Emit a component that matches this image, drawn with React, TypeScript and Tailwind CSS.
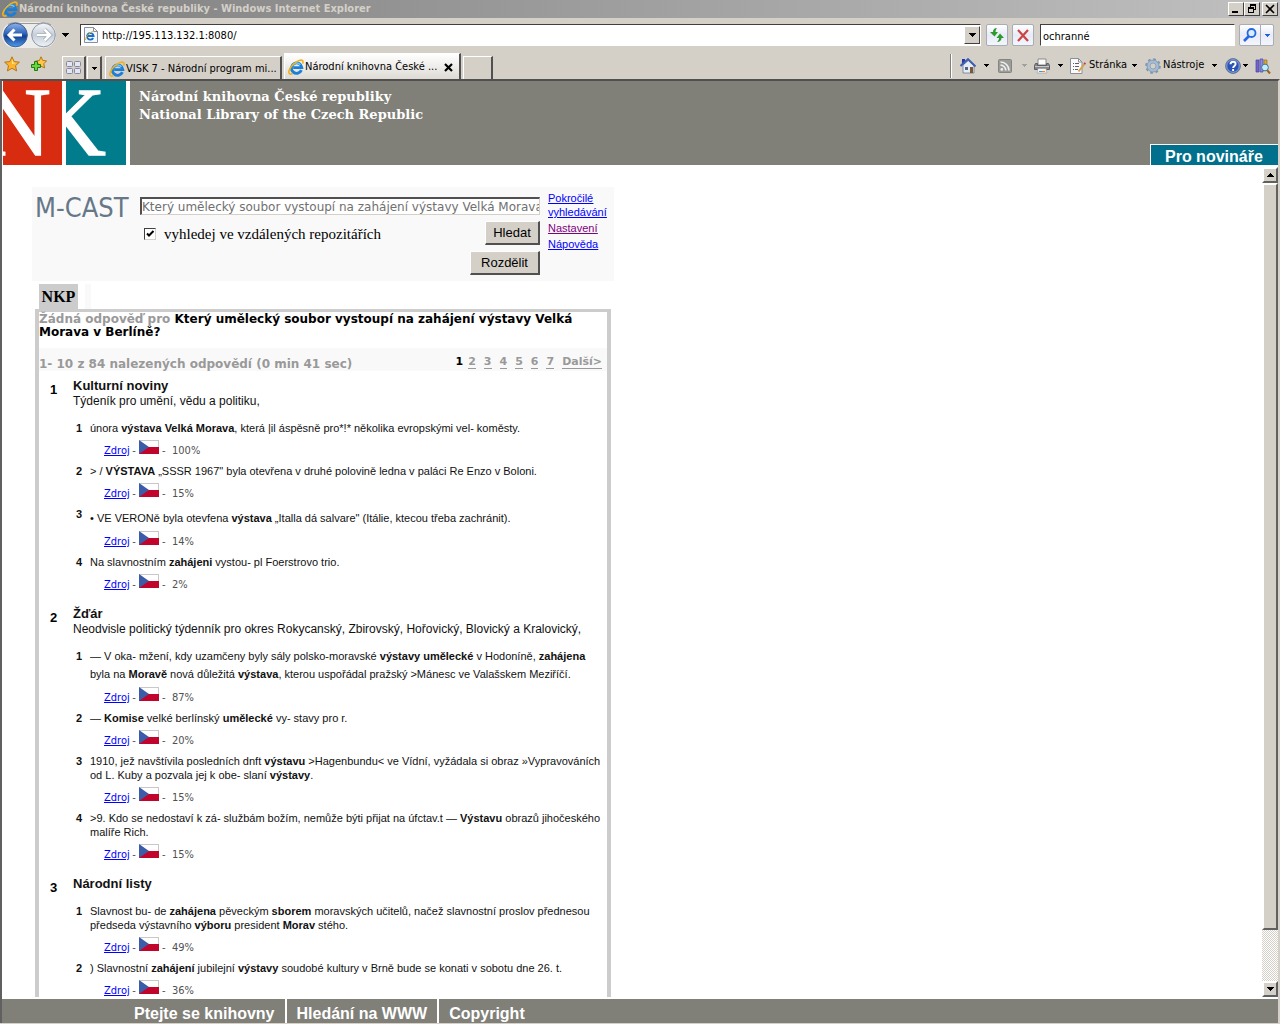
import type { ReactNode } from "react";

type Hit = {
  lines: ReactNode[];
  tall?: number;
  score: string;
};

type Group = {
  title: string;
  subtitle?: string;
  hits: Hit[];
};

const groups: Group[] = [
  {
    title: "Kulturní noviny",
    subtitle: "Týdeník pro umění, vědu a politiku,",
    hits: [
      { lines: [<>února <b>výstava Velká Morava</b>, která |il áspěsně pro*!* několika evropskými vel- koměsty.</>], score: "100%" },
      { lines: [<>&gt; / <b>VÝSTAVA</b> „SSSR 1967" byla otevřena v druhé polovině ledna v paláci Re Enzo v Boloni.</>], score: "15%" },
      { lines: [<>• VE VERONě byla otevfena <b>výstava</b> „Italla dá salvare" (Itálie, ktecou třeba zachránit).</>], tall: 0, score: "14%" },
      { lines: [<>Na slavnostním <b>zahájeni</b> vystou- pl Foerstrovo trio.</>], score: "2%" },
    ],
  },
  {
    title: "Žďár",
    subtitle: "Neodvisle politický týdenník pro okres Rokycanský, Zbirovský, Hořovický, Blovický a Kralovický,",
    hits: [
      {
        lines: [
          <>— V oka- mžení, kdy uzamčeny byly sály polsko-moravské <b>výstavy umělecké</b> v Hodoníně, <b>zahájena</b></>,
          <>byla na <b>Moravě</b> nová důležitá <b>výstava</b>, kterou uspořádal pražský &gt;Mánesc ve Valašskem Meziříčí.</>,
        ],
        tall: 1,
        score: "87%",
      },
      { lines: [<>— <b>Komise</b> velké berlínský <b>umělecké</b> vy- stavy pro r.</>], score: "20%" },
      {
        lines: [
          <>1910, jež navštívila posledních dnft <b>výstavu</b> &gt;Hagenbundu&lt; ve Vídní, vyžádala si obraz »Vypravováních</>,
          <>od L. Kuby a pozvala jej k obe- slaní <b>výstavy</b>.</>,
        ],
        score: "15%",
      },
      {
        lines: [
          <>&gt;9. Kdo se nedostaví k zá- službám božím, nemůže býti přijat na úfctav.t — <b>Výstavu</b> obrazů jihočeského</>,
          <>malíře Rich.</>,
        ],
        score: "15%",
      },
    ],
  },
  {
    title: "Národní listy",
    hits: [
      {
        lines: [
          <>Slavnost bu- de <b>zahájena</b> pěveckým <b>sborem</b> moravských učitelů, načež slavnostní proslov přednesou</>,
          <>předseda výstavního <b>výboru</b> president <b>Morav</b> stého.</>,
        ],
        score: "49%",
      },
      { lines: [<>) Slavnostní <b>zahájení</b> jubilejní <b>výstavy</b> soudobé kultury v Brně bude se konati v sobotu dne 26. t.</>], score: "36%" },
    ],
  },
];

function Caret({ className = "w-[7px] text-black" }: { className?: string }) {
  return (
    <svg className={`h-[4px] shrink-0 ${className}`} viewBox="0 0 7 4" fill="currentColor" shapeRendering="crispEdges">
      <path d="M0 0h7v1H6v1H5v1H4v1H3V3H2V2H1V1H0z" />
    </svg>
  );
}

function SmallCaret({ className = "text-black" }: { className?: string }) {
  return (
    <svg className={`h-[3px] w-[5px] shrink-0 ${className}`} viewBox="0 0 5 3" fill="currentColor" shapeRendering="crispEdges">
      <path d="M0 0h5v1H4v1H3v1H2V2H1V1H0z" />
    </svg>
  );
}

function IeLogo({ className = "size-4" }: { className?: string }) {
  return (
    <svg className={`shrink-0 ${className}`} viewBox="0 0 16 16" fill="none">
      <path d="M13.4 11.2A5.2 5.2 0 1 1 13.8 8.6H5.2" stroke="#1b7fd8" strokeWidth="2.9" />
      <path d="M4.3 6.6A4.8 4.8 0 0 1 12.4 5.8" stroke="#68c8fc" strokeWidth="1.4" />
      <path d="M14.6 4.6C15.6 2 14.6 .4 11.2 1.5 6.8 3 2 8 1 12c-.6 2.6.8 3.8 3.6 2.6" stroke="#f0b020" strokeWidth="1.6" />
    </svg>
  );
}

function BackForward() {
  return (
    <svg className="h-[30px] w-[56px] shrink-0" viewBox="0 0 56 30">
      <defs>
        <linearGradient id="back" x1="0" y1="0" x2="0" y2="1">
          <stop offset="0" stopColor="#8fb2e8" />
          <stop offset=".45" stopColor="#2b62b8" />
          <stop offset=".55" stopColor="#123f8f" />
          <stop offset="1" stopColor="#4f9df0" />
        </linearGradient>
        <linearGradient id="fwd" x1="0" y1="0" x2="0" y2="1">
          <stop offset="0" stopColor="#f6f8fa" />
          <stop offset=".5" stopColor="#c6ced9" />
          <stop offset="1" stopColor="#eef3f8" />
        </linearGradient>
      </defs>
      <rect x="2" y="2" width="54" height="26" rx="13" fill="#ececea" />
      <path d="M8 4.500Q14 1.500 20 3.500H39Q45 1.500 51 5" stroke="#9a9a96" fill="none" strokeWidth="1.2" />
      <circle cx="15.500" cy="15" r="11.800" fill="url(#back)" stroke="#3e5f96" />
      <circle cx="43.500" cy="15" r="11.800" fill="url(#fwd)" stroke="#8d97a6" />
      <path d="M9 15H22M14.500 9.500L9 15L14.500 20.500" stroke="#fff" strokeWidth="3" fill="none" />
      <path d="M37 15H50M44.500 9.500L50 15L44.500 20.500" stroke="#9aa3b0" strokeWidth="4" fill="none" />
      <path d="M37 15H50M44.500 9.500L50 15L44.500 20.500" stroke="#fff" strokeWidth="2.600" fill="none" />
    </svg>
  );
}

function Star() {
  return (
    <svg className="size-4" viewBox="0 0 16 16">
      <path d="M8 .8l2.200 4.800 5.200.6-3.900 3.500 1.100 5.200L8 12.300l-4.600 2.600 1.100-5.200L.6 6.200l5.200-.6z" fill="#fcb42c" stroke="#b8741a" />
      <path d="M8 3l1.300 3.500 3 .5-4.300 1z" fill="#ffe890" />
    </svg>
  );
}

function AddStar() {
  return (
    <svg className="size-4" viewBox="0 0 16 16">
      <path d="M10 .8l1.700 3.600 3.900.5-2.800 2.800.8 4.200L10 10.200l-3.600 1.700.7-4.200L4.500 5l3.900-.5z" fill="#fcc848" stroke="#b8741a" />
      <path d="M3.500 5.500h3v3h3v3h-3v3h-3v-3h-3v-3h3z" fill="#6ad444" stroke="#1c7c14" />
    </svg>
  );
}

function QuickTabs() {
  return (
    <svg className="size-4" viewBox="0 0 16 16" fill="#e4e6f6" stroke="#83879c">
      <rect x=".5" y="1.500" width="6" height="5" rx="1" />
      <rect x="8.500" y="1.500" width="6" height="5" rx="1" />
      <rect x=".5" y="8.500" width="6" height="5" rx="1" />
      <rect x="8.500" y="8.500" width="6" height="5" rx="1" />
    </svg>
  );
}

function Home() {
  return (
    <svg className="size-4" viewBox="0 0 16 16">
      <path d="M2 1h3v5H2z" fill="#2438b0" />
      <path d="M3 7l6-5 5 6v7H3z" fill="#e4ecf6" stroke="#6b7890" strokeWidth=".8" />
      <path d="M.5 8L8 1.200L15.500 8.500" fill="none" stroke="#3f5eac" strokeWidth="2" />
      <path d="M5 9h3v3H5z" fill="#56657c" />
      <path d="M10 9h3v6h-3z" fill="#7e5634" />
    </svg>
  );
}

function Feed() {
  return (
    <svg className="size-4" viewBox="0 0 16 16" fill="none" stroke="#efefef" strokeWidth="1.700">
      <rect x="1.500" y="1.500" width="13" height="13" rx="1" fill="#9c9c98" stroke="#858580" strokeWidth="1" />
      <circle cx="4.800" cy="11.400" r="1.400" fill="#efefef" stroke="none" />
      <path d="M3.500 7.200a5.300 5.300 0 0 1 5.300 5.300M3.500 4a8.500 8.500 0 0 1 8.500 8.500" />
    </svg>
  );
}

function Printer() {
  return (
    <svg className="size-4" viewBox="0 0 16 16">
      <path d="M4 1h8v6H4z" fill="#fdfdfd" stroke="#8a8a8a" />
      <path d="M1.500 5.500h2v2h9v-2h2l1 2v4H.5v-4z" fill="#85858b" stroke="#5e5e62" />
      <path d="M1 8.500h14" stroke="#c8c8cc" />
      <path d="M4 10.500h8l1 4.500H3z" fill="#f6f6f6" stroke="#999" strokeWidth=".6" />
      <path d="M5 13.500h3" stroke="#28a0d8" />
      <path d="M8 13.500h3" stroke="#e8862c" />
    </svg>
  );
}

function PageIcon() {
  return (
    <svg className="size-4" viewBox="0 0 16 16">
      <path d="M.5.5h8l3.500 3.500v11.500H.5z" fill="#fafafa" stroke="#8a8f98" />
      <path d="M8.500.5V4H12" fill="none" stroke="#8a8f98" />
      <path d="M3 5.500h1M5 5.500h4M3 8.500h1M5 8.500h4M3 11.500h1M5 11.500h3" stroke="#5b6070" />
      <path d="M14.500 6L8.500 13.500" stroke="#d8a048" strokeWidth="2" />
      <path d="M15.300 4.800L14.300 6.200" stroke="#c44040" strokeWidth="2" />
    </svg>
  );
}

function Gear() {
  return (
    <svg className="size-4" viewBox="0 0 16 16" fill="none">
      <circle cx="8" cy="8" r="6.800" stroke="#7d93ac" strokeWidth="2" strokeDasharray="2.670 2.670" />
      <circle cx="8" cy="8" r="4.800" stroke="#a4bcd4" strokeWidth="3" />
      <circle cx="8" cy="8" r="6" stroke="#7790ac" strokeWidth=".7" />
      <circle cx="8" cy="8" r="3" stroke="#7790ac" strokeWidth=".7" />
    </svg>
  );
}

function Help() {
  return (
    <svg className="size-4" viewBox="0 0 16 16">
      <circle cx="8" cy="8" r="7.400" fill="#2b55b4" stroke="#6c7890" />
      <circle cx="8" cy="8" r="6.300" fill="none" stroke="#a8bce8" strokeWidth=".8" />
      <path d="M5.500 6.300C5.500 2.800 10.600 3 10.600 6.100c0 1.800-2.500 1.800-2.500 3.900M8.100 11v2" stroke="#fff" strokeWidth="1.900" fill="none" />
    </svg>
  );
}

function Research() {
  return (
    <svg className="size-4" viewBox="0 0 16 16">
      <path d="M1 2h3v12H1z" fill="#6d68c8" stroke="#4640a0" strokeWidth=".7" />
      <path d="M5 1h3v13H5z" fill="#8d8ae0" stroke="#4640a0" strokeWidth=".7" />
      <path d="M9 2h3v6H9z" fill="#d8a838" stroke="#927020" strokeWidth=".7" />
      <path d="M12 12l3 3.500" stroke="#9a6420" strokeWidth="2" />
      <circle cx="10" cy="9.500" r="3.400" fill="#bfeefa" stroke="#48708c" />
    </svg>
  );
}

function Flag() {
  return (
    <svg className="h-[14px] w-5 shrink-0 self-start" viewBox="0 0 20 14">
      <rect x=".5" y=".5" width="19" height="13" fill="#fff" stroke="#c8c8c8" />
      <path d="M0 7h20v7H0z" fill="#c0042c" />
      <path d="M0 0l10 7L0 14z" fill="#3c5ca8" />
    </svg>
  );
}

function WindowButton({ label, children }: { label: string; children: ReactNode }) {
  return (
    <button aria-label={label} className="flex h-[14px] w-4 items-center justify-center border border-t-white border-r-[#404040] border-b-[#404040] border-l-white bg-[#d4d0c8]">
      <svg className="h-[10px] w-3" viewBox="0 0 12 10" shapeRendering="crispEdges">{children}</svg>
    </button>
  );
}

function TitleBar() {
  return (
    <header className="flex h-[18px] items-center bg-linear-to-r from-[#808080] to-[#c0c0c0] px-[2px]">
      <IeLogo />
      <h1 className="ml-px flex-1 text-[11px] font-bold text-[#d4d0c8]">Národní knihovna České republiky - Windows Internet Explorer</h1>
      <WindowButton label="Minimize"><path d="M2 7h6v2H2z" /></WindowButton>
      <WindowButton label="Restore"><path d="M4 0h6v6H8V5h1V2H5v1H4zM2 3h6v6H2zM3 5v3h4V5z" fillRule="evenodd" /></WindowButton>
      <span className="w-[2px]" />
      <WindowButton label="Close"><path d="M2 1l8 8M10 1l-8 8" stroke="#000" strokeWidth="1.600" shapeRendering="auto" /></WindowButton>
    </header>
  );
}

function AddressBar() {
  const sunken = "border border-t-[#404040] border-r-white border-b-white border-l-[#404040] bg-white";
  const soft = "flex h-[22px] items-center justify-center rounded-[2px] border border-[#a8acb8] bg-linear-to-b from-white via-[#e8ebf6] to-[#f4f6fc]";
  return (
    <div className="flex h-[34px] items-center pr-[6px]">
      <button aria-label="Back and forward"><BackForward /></button>
      <button aria-label="Recent pages" className="mr-[11px] ml-[6px]"><Caret /></button>
      <div className={`flex h-[22px] min-w-0 flex-1 items-center pl-[2px] ${sunken}`}>
        <svg className="size-4 shrink-0" viewBox="0 0 16 16">
          <path d="M1.500.5h9l4 4v11h-13z" fill="#f4f7fc" stroke="#8890a0" />
          <path d="M10.500.5v4h4" fill="none" stroke="#8890a0" />
          <path d="M10.200 11A3.300 3.300 0 1 1 10.600 9H4.500" fill="none" stroke="#1b6fc4" strokeWidth="1.800" />
          <path d="M11 4.500C8 4 2.500 9 2.500 13" fill="none" stroke="#f0b020" />
        </svg>
        <input aria-label="Address" className="ml-[3px] min-w-0 flex-1 pt-[2px] text-[11px] outline-none" defaultValue="http://195.113.132.1:8080/" />
        <button aria-label="Show addresses" className="flex h-[18px] w-4 items-center justify-center border border-t-white border-r-[#404040] border-b-[#404040] border-l-white bg-[#d4d0c8]"><Caret /></button>
      </div>
      <button aria-label="Refresh" className={`ml-[5px] w-[22px] ${soft}`}>
        <svg className="size-4" viewBox="0 0 16 16" fill="#2c9a2c">
          <path d="M8 1C5 1 4 3 4 5H1l4.500 4.500L9 5H6.500C6.500 3.500 7 2.500 8 1z" />
          <path d="M8 15c3 0 4.500-2 4.500-4H15l-4-4.500L7.500 11H10c0 1.500-.5 2.500-2 4z" />
        </svg>
      </button>
      <button aria-label="Stop" className={`ml-1 w-[22px] ${soft}`}>
        <svg className="size-4" viewBox="0 0 16 16" stroke="#cc4444" strokeWidth="2.200"><path d="M3 3l10 11M13 3L3 14" /></svg>
      </button>
      <input aria-label="Search the web" className={`ml-[6px] h-[22px] w-[195px] px-[2px] pt-[2px] text-[11px] outline-none ${sunken}`} defaultValue="ochranné" />
      <button aria-label="Search" className={`ml-1 w-[22px] rounded-r-none ${soft}`}>
        <svg className="size-4" viewBox="0 0 16 16" fill="none" stroke="#2468e0">
          <path d="M2 14l5-5" strokeWidth="2.600" />
          <circle cx="9.500" cy="6" r="4" fill="#dcecff" strokeWidth="1.800" />
        </svg>
      </button>
      <button aria-label="Search options" className={`-ml-px w-[14px] rounded-l-none ${soft}`}><SmallCaret className="text-[#1c60e0]" /></button>
    </div>
  );
}

function TabBar() {
  const raised = "flex items-center border-t border-r-2 border-l border-t-white border-r-[#505050] border-l-white";
  return (
    <nav className="flex h-[27px] items-end">
      <button aria-label="Favorites" className="mb-[7px] ml-1"><Star /></button>
      <button aria-label="Add to favorites" className="mb-[7px] ml-[11px]"><AddStar /></button>
      <button aria-label="Quick tabs" className={`ml-[15px] h-[23px] w-[24px] justify-center ${raised}`}><QuickTabs /></button>
      <button aria-label="Tab list" className={`ml-px h-[23px] w-[15px] justify-center ${raised}`}><SmallCaret /></button>
      <button className={`ml-[3px] h-[23px] w-[177px] pt-[2px] pl-[3px] text-[11px] ${raised}`}>
        <IeLogo />
        <span className="ml-px whitespace-nowrap">VISK 7 - Národní program mi...</span>
      </button>
      <button className={`ml-[2px] h-[26px] w-[177px] bg-linear-to-b from-white to-[#dedbd5] pt-px pl-[3px] text-[11px] ${raised}`}>
        <IeLogo />
        <span className="ml-px whitespace-nowrap">Národní knihovna České ...</span>
        <svg className="mr-[6px] ml-auto h-[9px] w-[9px]" viewBox="0 0 9 9" stroke="#000" strokeWidth="2.200"><path d="M1 1l7 7M8 1L1 8" /></svg>
      </button>
      <button aria-label="New tab" className={`ml-[2px] h-[23px] w-[30px] ${raised}`} />
      <div className="ml-auto flex h-full items-center pr-[9px] text-[11px]">
        <span className="mr-2 h-6 w-[2px] border-r border-l border-r-white border-l-[#808080]" />
        <button aria-label="Home" className="flex w-[37px] items-center gap-2"><Home /><SmallCaret /></button>
        <button aria-label="Feeds" className="flex w-[37px] items-center gap-[9px]"><Feed /><SmallCaret className="text-[#a0a09c]" /></button>
        <button aria-label="Print" className="flex w-[36px] items-center gap-2"><Printer /><SmallCaret /></button>
        <button className="flex w-[75px] items-center"><PageIcon /><span className="ml-[3px] flex-1 text-left">Stránka</span><SmallCaret className="mr-2 text-black" /></button>
        <button className="flex w-[80px] items-center"><Gear /><span className="ml-[2px] flex-1 text-left">Nástroje</span><SmallCaret className="mr-2 text-black" /></button>
        <button aria-label="Help" className="flex w-[30px] items-center gap-[2px]"><Help /><SmallCaret /></button>
        <button aria-label="Research"><Research /></button>
      </div>
    </nav>
  );
}

function LibraryHeader() {
  return (
    <div className="flex h-[84px] shrink-0 bg-[#808078]">
      <svg className="h-[84px] w-32 shrink-0" viewBox="0 0 128 84" role="img" aria-label="NK">
        <rect width="128" height="84" fill="#fff" />
        <svg x="1" width="59" height="84" viewBox="0 0 59 84">
          <rect width="59" height="84" fill="#d82c10" />
          <text x="-23" y="74" fontSize="98" fontFamily="'Liberation Serif', serif" fill="#fff" stroke="#fff" strokeWidth="1.500">N</text>
        </svg>
        <svg x="64" width="60" height="84" viewBox="0 0 60 84">
          <rect width="60" height="84" fill="#007c8c" />
          <text x="-31" y="74" fontSize="98" fontFamily="'Liberation Serif', serif" fill="#fff" stroke="#fff" strokeWidth="1.500">K</text>
        </svg>
      </svg>
      <div className="pt-[7px] pl-[9px] font-['DejaVu_Serif',serif] text-[13px] leading-[18px] font-bold text-white">
        <p>Národní knihovna České republiky</p>
        <p>National Library of the Czech Republic</p>
      </div>
      <a href="#press" className="mt-auto ml-auto h-[21px] w-32 border-t border-l border-white bg-[#00708c] pl-[14px] font-['Liberation_Sans',sans-serif] text-[16px] leading-[24px] font-bold text-white">Pro novináře</a>
    </div>
  );
}

function SearchPanel() {
  const button = "h-6 border-t border-r-2 border-b-2 border-l border-t-white border-r-[#505050] border-b-[#505050] border-l-white bg-[#d4d0c8] text-[13px]";
  return (
    <form className="flex h-[94px] w-[582px] bg-[#f9f9f9] font-['Liberation_Sans',sans-serif]">
      <h2 className="w-[108px] pt-1 pl-[3px] font-['DejaVu_Sans_Condensed','DejaVu_Sans',sans-serif] text-[27px] leading-[34px] text-[#667888]">M-CAST</h2>
      <div className="w-[400px] pt-[10px]">
        <input
          aria-label="Dotaz"
          className="block h-[18px] w-full border border-t-2 border-l-2 border-t-[#505050] border-r-[#d4d0c8] border-b-[#d4d0c8] border-l-[#505050] bg-white pt-px font-['DejaVu_Sans',sans-serif] text-[12px] text-[#707070] outline-none"
          defaultValue="Který umělecký soubor vystoupí na zahájení výstavy Velká Morava v Berlíně?"
        />
        <div className="mt-[6px] flex items-start">
          <label className="mt-[4px] ml-1 grid flex-1 grid-cols-[12px_1fr] items-center gap-x-2 font-['Liberation_Serif',serif] text-[15px] leading-[18px]">
            <input type="checkbox" defaultChecked className="peer col-start-1 row-start-1 size-3 appearance-none border border-t-[#404040] border-r-[#d4d0c8] border-b-[#d4d0c8] border-l-[#404040] bg-white" />
            <svg className="pointer-events-none invisible col-start-1 row-start-1 size-3 peer-checked:visible" viewBox="0 0 12 12" fill="none" stroke="#000" strokeWidth="2">
              <path d="M3 5.500L5 7.500L9.500 3" />
            </svg>
            <span className="col-start-2">vyhledej ve vzdálených repozitářích</span>
          </label>
          <button type="button" className={`w-[55px] ${button}`}>Hledat</button>
        </div>
        <button type="button" className={`mt-[6px] ml-auto block w-[70px] ${button}`}>Rozdělit</button>
      </div>
      <div className="flex flex-col gap-[2px] pt-1 pl-2 text-[11px] leading-[14px] text-[#0000ff] underline">
        <a href="#advanced">Pokročilé<br />vyhledávání</a>
        <a href="#settings" className="text-[#800080]">Nastavení</a>
        <a href="#help">Nápověda</a>
      </div>
    </form>
  );
}

function HitRow({ hit, index }: { hit: Hit; index: number }) {
  return (
    <li className="flex pb-[6px] text-[11px] leading-[14px]">
      <b className="w-[14px] shrink-0">{index + 1}</b>
      <div>
        {hit.lines.map((line, i) => (
          <p key={i} className={hit.tall === i ? "pt-1 pb-px whitespace-nowrap" : "whitespace-nowrap"}>{line}</p>
        ))}
        <p className="mt-[5px] flex h-[18px] items-end pl-[14px] font-['DejaVu_Sans_Condensed','DejaVu_Sans',sans-serif] text-[#505050]">
          <a href="#source" className="w-[25px] text-[#0000ff] underline">Zdroj</a>
          <span className="w-[10px] text-center">-</span>
          <Flag />
          <span className="w-[13px] pl-[3px]">-</span>
          {hit.score}
        </p>
      </div>
    </li>
  );
}

function Results() {
  return (
    <section className="w-[576px] border-x-4 border-t-[3px] border-[#ccc] font-['Liberation_Sans',sans-serif]">
      <div className="font-['DejaVu_Sans',sans-serif] text-[12px] leading-[13px] font-bold">
        <p className="pt-px pr-6"><span className="text-[#999]">Žádná odpověď pro</span> Který umělecký soubor vystoupí na zahájení výstavy Velká Morava v Berlíně?</p>
        <div className="mt-[9px] flex h-[23px] items-end justify-between bg-[#f9f9f9] pr-[5px] text-[#999]">
          <p>1- 10 z 84 nalezených odpovědí (0 min 41 sec)</p>
          <div className="mb-[2px] flex gap-2 text-[11px]">
            <span className="-mr-[3px] text-black">1</span>
            {[2, 3, 4, 5, 6, 7].map((n) => (
              <a key={n} href={`#page-${n}`} className="border-b border-[#999]">{n}</a>
            ))}
            <a href="#next" className="border-b border-[#999]">Další&gt;</a>
          </div>
        </div>
      </div>
      <ol className="pt-[7px]">
        {groups.map((group, i) => (
          <li key={group.title} className="flex pb-2">
            <b className="w-[34px] shrink-0 pt-1 pl-[11px] text-[13px] leading-4">{i + 1}</b>
            <div className="text-[#111]">
              <h3 className="text-[13px] leading-4 font-bold">{group.title}</h3>
              {group.subtitle && <p className="text-[12px] leading-[15px] whitespace-nowrap">{group.subtitle}</p>}
              <ol className="pt-3 pl-[3px]">
                {group.hits.map((hit, j) => <HitRow key={j} hit={hit} index={j} />)}
              </ol>
            </div>
          </li>
        ))}
      </ol>
    </section>
  );
}

function Scrollbar() {
  const part = "border-2 border-t-white border-r-[#606060] border-b-[#606060] border-l-white bg-[#d4d0c8]";
  return (
    <div className="flex w-4 shrink-0 flex-col bg-[repeating-conic-gradient(#d4d0c8_0_25%,#fff_0_50%)] bg-[length:2px_2px]">
      <button aria-label="Scroll up" className={`flex h-4 items-center justify-center ${part}`}><Caret className="w-[7px] rotate-180 text-black" /></button>
      <div className={`h-[90%] ${part}`} />
      <button aria-label="Scroll down" className={`mt-auto flex h-4 items-center justify-center ${part}`}><Caret /></button>
    </div>
  );
}

export default function App() {
  return (
    <div className="flex h-screen flex-col overflow-hidden bg-[#d4d0c8] font-['DejaVu_Sans_Condensed','DejaVu_Sans',sans-serif] text-black">
      <TitleBar />
      <AddressBar />
      <TabBar />
      <div className="mb-px flex min-h-0 flex-1 flex-col border-t-2 border-r-2 border-l-2 border-t-[#505050] border-r-[#d4d0c8] border-l-[#606060] bg-white">
        <LibraryHeader />
        <div className="flex min-h-0 flex-1 py-[2px]">
          <main className="min-w-0 flex-1 overflow-hidden pt-5 pl-[30px]">
            <SearchPanel />
            <div className="mt-[3px] flex h-[25px] gap-[7px] pl-[7px]">
              <h2 className="w-[39px] bg-[#ccc] text-center font-['Liberation_Serif',serif] text-[16px] leading-[25px] font-bold">NKP</h2>
              <span className="w-[6px] bg-[#f9f9f9]" />
            </div>
            <div className="pl-[3px]"><Results /></div>
          </main>
          <Scrollbar />
        </div>
        <footer className="flex h-6 shrink-0 bg-[#808078] pl-[122px] font-['Liberation_Sans',sans-serif] text-[16px] leading-[29px] font-bold text-white">
          <a href="#ask" className="border-r-2 border-white px-[10px]">Ptejte se knihovny</a>
          <a href="#web" className="border-r-2 border-white px-[10px]">Hledání na WWW</a>
          <a href="#copyright" className="px-[10px]">Copyright</a>
        </footer>
      </div>
    </div>
  );
}
